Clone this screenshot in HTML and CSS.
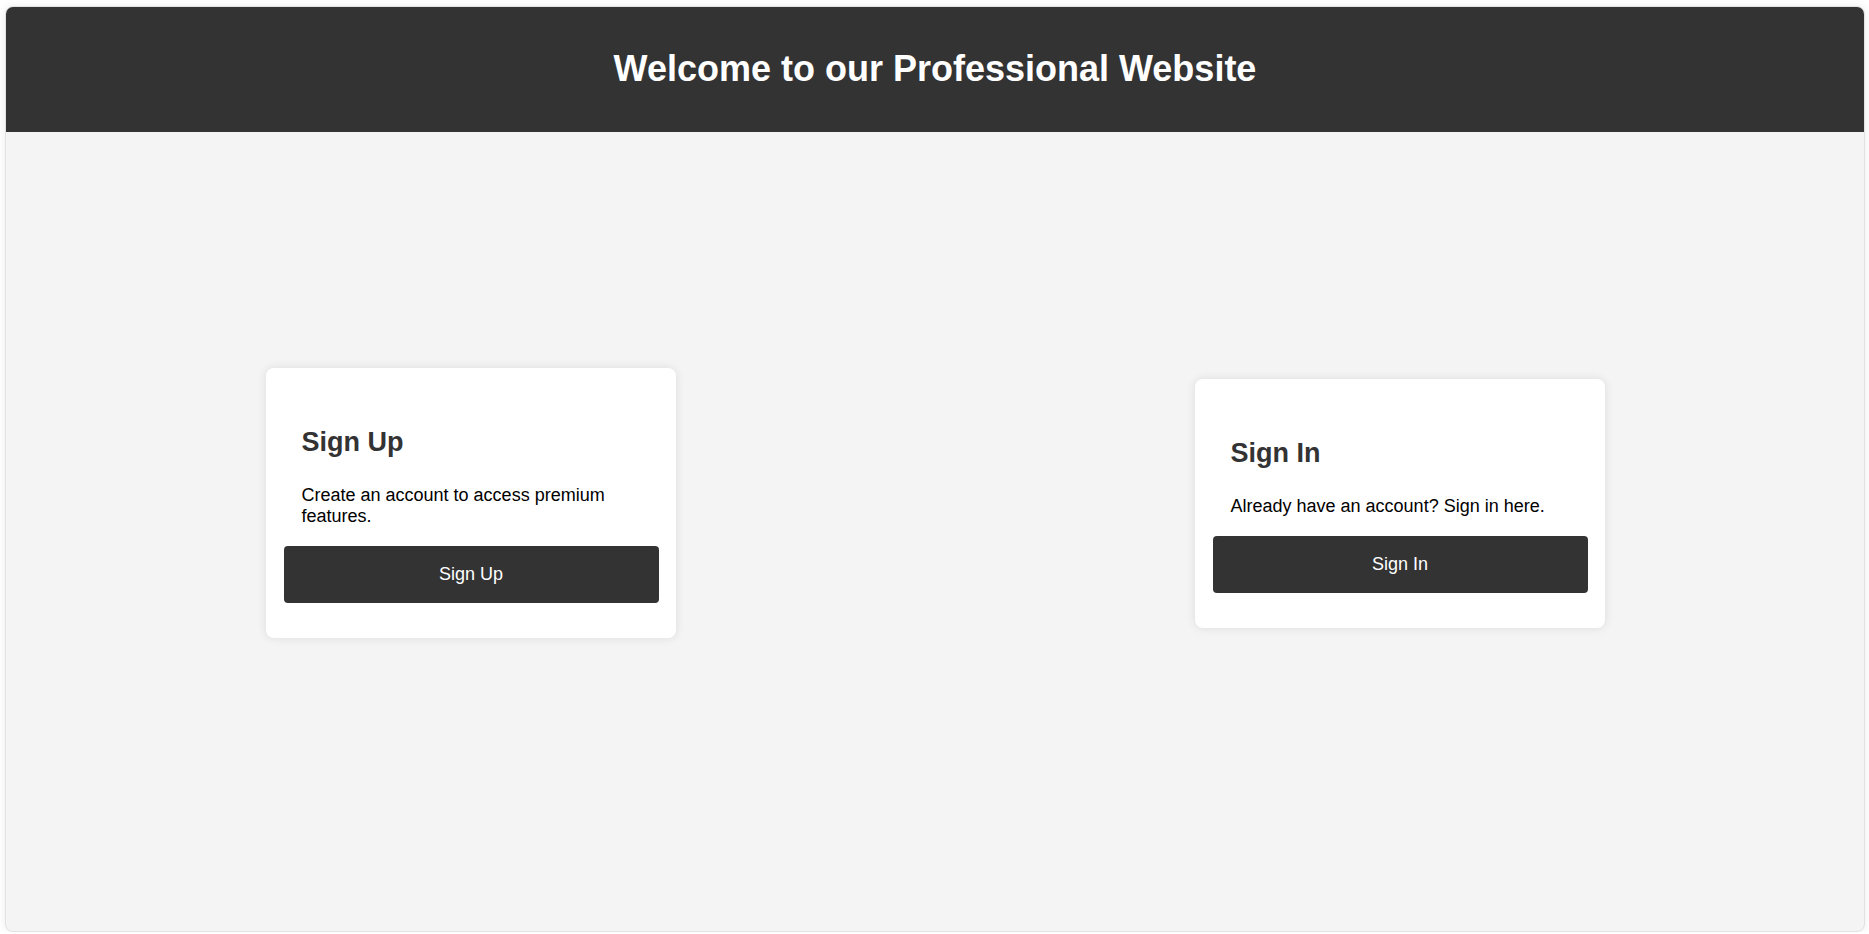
FILE: index.html
```html
<!DOCTYPE html>
<html lang="en">
<head>
<meta charset="utf-8">
<title>Welcome</title>
<link rel="stylesheet" href="styles.css">
</head>
<body>
<div class="page">
  <header class="site-header">
    <h1 class="site-title">Welcome to our Professional Website</h1>
  </header>
  <main class="site-main">
    <section class="card">
      <div class="card-body">
        <h2 class="card-title">Sign Up</h2>
        <p class="card-text">Create an account to access premium features.</p>
      </div>
      <button class="btn" type="button">Sign Up</button>
    </section>
    <section class="card">
      <div class="card-body">
        <h2 class="card-title">Sign In</h2>
        <p class="card-text">Already have an account? Sign in here.</p>
      </div>
      <button class="btn" type="button">Sign In</button>
    </section>
  </main>
</div>
</body>
</html>
```

FILE: styles.css
```css
html, body {
  margin: 0;
  padding: 0;
  background: #ffffff;
}

body {
  font-family: "Liberation Sans", Arial, sans-serif;
  font-size: 18px;
  color: #000;
}

.page {
  margin: 6px 4px 0 5px;
  height: 926px;
  box-sizing: border-box;
  border: 1px solid #e2e2e2;
  border-radius: 8px;
  overflow: hidden;
  box-shadow: 0 0 8px rgba(0, 0, 0, 0.08);
  display: flex;
  flex-direction: column;
  background: #f4f4f4;
}

.site-header {
  background: #333333;
  color: #ffffff;
  padding: 41px 0 42px;
  text-align: center;
  flex: none;
}

.site-title {
  margin: 0;
  font-size: 36px;
  line-height: 42px;
  font-weight: bold;
}

.site-main {
  flex: 1;
  display: flex;
  justify-content: space-around;
  align-items: center;
  padding-bottom: 57px;
}

.card {
  width: 410px;
  box-sizing: border-box;
  background: #ffffff;
  border-radius: 8px;
  box-shadow: 0 0 10px rgba(0, 0, 0, 0.1);
  padding: 18px 17px 35px 18px;
}

.card-body {
  padding: 0 19px 0 18px;
}

.card-title {
  margin: 41px 0 27px;
  font-size: 27px;
  line-height: 31px;
  font-weight: bold;
  color: #333333;
}

.card-text {
  margin: 0 0 19px;
  line-height: 21px;
  color: #000;
}

.btn {
  display: block;
  width: 100%;
  box-sizing: border-box;
  background: #333333;
  color: #ffffff;
  border: none;
  border-radius: 4px;
  padding: 18px;
  font-family: "Liberation Sans", Arial, sans-serif;
  font-size: 18px;
  line-height: 21px;
  cursor: pointer;
}
```
